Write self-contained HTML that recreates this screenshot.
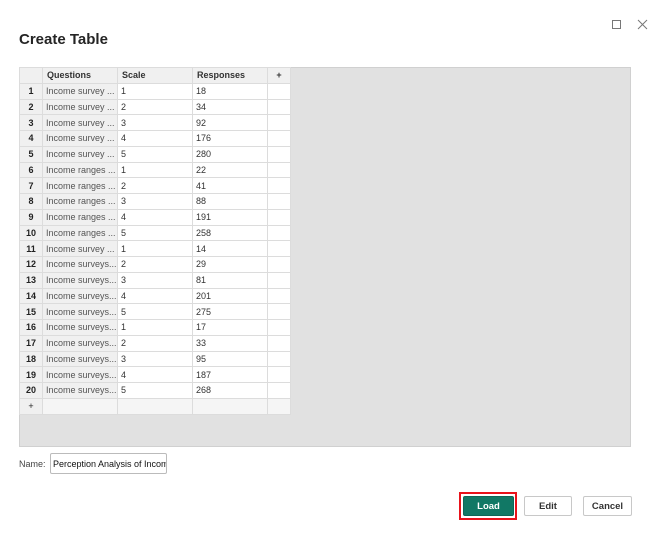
<!DOCTYPE html>
<html><head><meta charset="utf-8"><style>
body{margin:0;width:650px;height:547px;background:#fff;font-family:"Liberation Sans",sans-serif;position:relative;overflow:hidden}
.title{position:absolute;left:19px;top:31px;font-size:15px;font-weight:bold;color:#252525}
.area{position:absolute;left:19px;top:67px;width:612px;height:380px;background:#e1e1e1;box-sizing:border-box;border:1px solid #d0d0d0}
table{position:absolute;left:19px;top:67px;width:271px;border-collapse:collapse;table-layout:fixed;font-size:9px;color:#333}
td{border:1px solid #dcdcdc;height:14.75px;padding:0 0 0 3px;white-space:nowrap;overflow:hidden;background:#fff}
td.n{background:#f0f0f0;text-align:center;font-weight:bold;padding:0;color:#222}
td.q{background:#f0f0f0;color:#555}
tr.h td{background:#f0f0f0;font-weight:bold;color:#333;padding-left:4px}
.btn{position:absolute;top:496px;height:20px;box-sizing:border-box;border:1px solid #c8c8c8;border-radius:2px;font-size:9.5px;font-weight:bold;text-align:center;line-height:19px;background:#fff;color:#333}
</style></head><body>
<svg style="position:absolute;left:611px;top:19px" width="40" height="12"><rect x="1.5" y="1.5" width="8" height="8" fill="none" stroke="#777"/><path d="M27 1 L36 10 M36 1 L27 10" stroke="#777" stroke-width="1"/></svg>
<div class="title">Create Table</div>
<div class="area"></div>
<table>
<colgroup><col style="width:23px"><col style="width:75px"><col style="width:75px"><col style="width:75px"><col style="width:23px"></colgroup>
<tr class="h"><td class="n"></td><td>Questions</td><td>Scale</td><td>Responses</td><td style="text-align:center;padding:0">+</td></tr>
<tr><td class="n">1</td><td class="q">Income survey ...</td><td>1</td><td>18</td><td></td></tr>
<tr><td class="n">2</td><td class="q">Income survey ...</td><td>2</td><td>34</td><td></td></tr>
<tr><td class="n">3</td><td class="q">Income survey ...</td><td>3</td><td>92</td><td></td></tr>
<tr><td class="n">4</td><td class="q">Income survey ...</td><td>4</td><td>176</td><td></td></tr>
<tr><td class="n">5</td><td class="q">Income survey ...</td><td>5</td><td>280</td><td></td></tr>
<tr><td class="n">6</td><td class="q">Income ranges ...</td><td>1</td><td>22</td><td></td></tr>
<tr><td class="n">7</td><td class="q">Income ranges ...</td><td>2</td><td>41</td><td></td></tr>
<tr><td class="n">8</td><td class="q">Income ranges ...</td><td>3</td><td>88</td><td></td></tr>
<tr><td class="n">9</td><td class="q">Income ranges ...</td><td>4</td><td>191</td><td></td></tr>
<tr><td class="n">10</td><td class="q">Income ranges ...</td><td>5</td><td>258</td><td></td></tr>
<tr><td class="n">11</td><td class="q">Income survey ...</td><td>1</td><td>14</td><td></td></tr>
<tr><td class="n">12</td><td class="q">Income surveys...</td><td>2</td><td>29</td><td></td></tr>
<tr><td class="n">13</td><td class="q">Income surveys...</td><td>3</td><td>81</td><td></td></tr>
<tr><td class="n">14</td><td class="q">Income surveys...</td><td>4</td><td>201</td><td></td></tr>
<tr><td class="n">15</td><td class="q">Income surveys...</td><td>5</td><td>275</td><td></td></tr>
<tr><td class="n">16</td><td class="q">Income surveys...</td><td>1</td><td>17</td><td></td></tr>
<tr><td class="n">17</td><td class="q">Income surveys...</td><td>2</td><td>33</td><td></td></tr>
<tr><td class="n">18</td><td class="q">Income surveys...</td><td>3</td><td>95</td><td></td></tr>
<tr><td class="n">19</td><td class="q">Income surveys...</td><td>4</td><td>187</td><td></td></tr>
<tr><td class="n">20</td><td class="q">Income surveys...</td><td>5</td><td>268</td><td></td></tr>
<tr><td class="n" style="font-weight:normal">+</td><td style="background:#f5f5f5"></td><td style="background:#f5f5f5"></td><td style="background:#f5f5f5"></td><td style="background:#f5f5f5"></td></tr>
</table>
<div style="position:absolute;left:19px;top:459px;font-size:9px;color:#444">Name:</div>
<div style="position:absolute;left:50px;top:453px;width:117px;height:21px;box-sizing:border-box;border:1px solid #bbb;border-radius:2px;font-size:9px;line-height:21px;padding-left:2px;overflow:hidden;white-space:nowrap;color:#111">Perception Analysis of Incom</div>
<div style="position:absolute;left:459px;top:492px;width:58px;height:28px;box-sizing:border-box;border:2px solid #e8131b"></div>
<div class="btn" style="left:463px;width:51px;background:#117865;border-color:#0e6656;color:#fff">Load</div>
<div class="btn" style="left:524px;width:48px">Edit</div>
<div class="btn" style="left:583px;width:49px">Cancel</div>
</body></html>
